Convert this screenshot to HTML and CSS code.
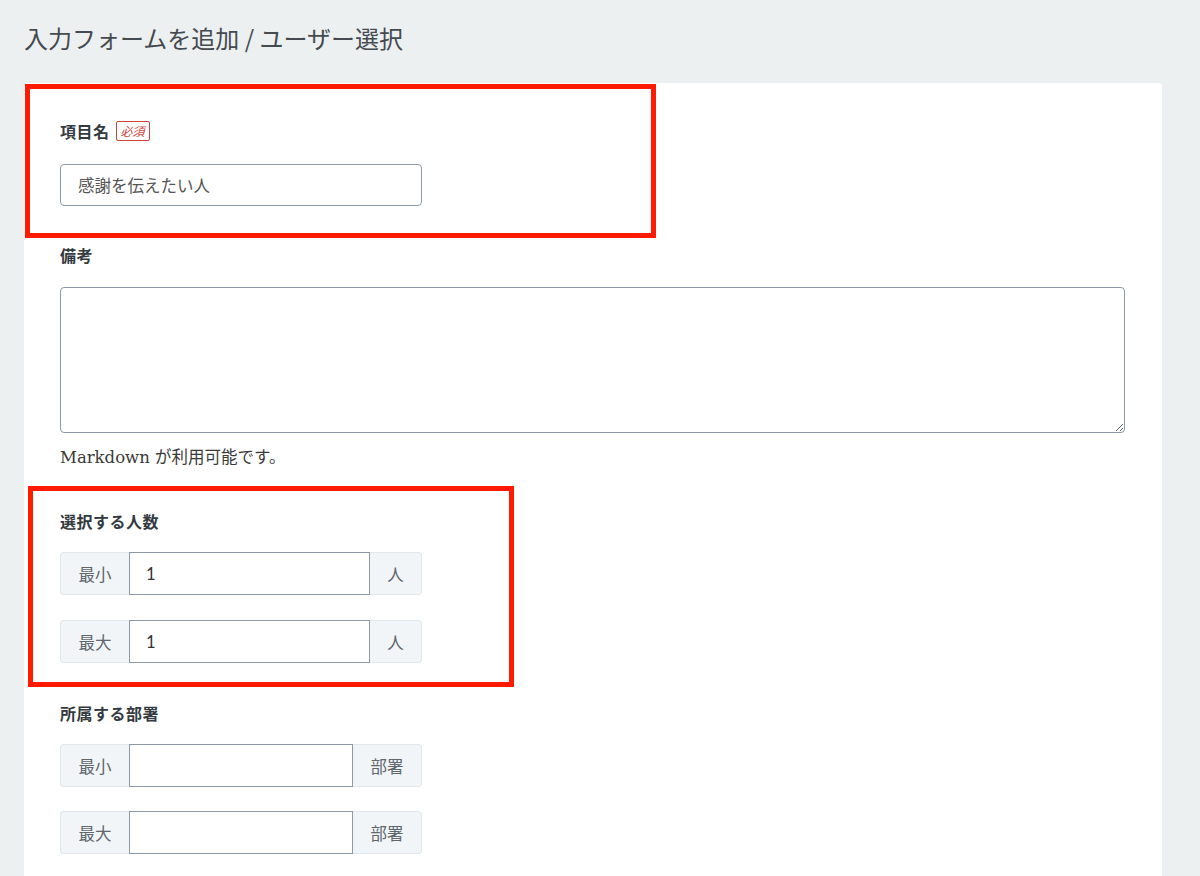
FILE: index.html
```html
<!DOCTYPE html>
<html lang="ja">
<head>
<meta charset="utf-8">
<title>入力フォームを追加 / ユーザー選択</title>
<link rel="stylesheet" href="styles.css">
</head>
<body>
<div class="page">
  <h1 class="page-title">入力フォームを追加 / ユーザー選択</h1>
  <div class="card">
    <div class="field field-name">
      <div class="label">項目名 <span class="badge">必須</span></div>
      <input class="text-input name-input" type="text" value="感謝を伝えたい人">
    </div>
    <div class="field field-note">
      <div class="label">備考</div>
      <textarea class="textarea"></textarea>
      <div class="help">Markdown が利用可能です。</div>
    </div>
    <div class="field field-count">
      <div class="label">選択する人数</div>
      <div class="input-group">
        <span class="addon addon-left">最小</span>
        <input class="group-input" type="text" value="1">
        <span class="addon addon-right">人</span>
      </div>
      <div class="input-group">
        <span class="addon addon-left">最大</span>
        <input class="group-input" type="text" value="1">
        <span class="addon addon-right">人</span>
      </div>
    </div>
    <div class="field field-dept">
      <div class="label">所属する部署</div>
      <div class="input-group">
        <span class="addon addon-left">最小</span>
        <input class="group-input" type="text" value="">
        <span class="addon addon-right wide">部署</span>
      </div>
      <div class="input-group">
        <span class="addon addon-left">最大</span>
        <input class="group-input" type="text" value="">
        <span class="addon addon-right wide">部署</span>
      </div>
    </div>
    <div class="highlight highlight-name"></div>
    <div class="highlight highlight-count"></div>
  </div>
</div>
</body>
</html>
```

FILE: styles.css
```css
* { box-sizing: border-box; }

html, body {
  margin: 0;
  padding: 0;
  background: #edf0f1;
  font-family: "Lato", "Noto Sans CJK JP", sans-serif;
  color: #333;
}

.page {
  padding: 0 38px 0 24px;
}

.page-title {
  margin: 0;
  padding-top: 23px;
  height: 83px;
  font-size: 24px;
  line-height: 30px;
  font-weight: 400;
  color: #444a4f;
  font-family: "Noto Sans CJK JP", sans-serif;
}

.card {
  position: relative;
  background: #fff;
  border-radius: 4px;
  padding: 38px 37px 60px 36px;
  min-height: 900px;
}

.field { display: flex; flex-direction: column; align-items: flex-start; }

.label {
  font-family: "Noto Sans CJK JP", sans-serif;
  font-size: 16px;
  letter-spacing: 0.5px;
  font-weight: 700;
  line-height: 20px;
  color: #333a40;
  display: flex;
  align-items: center;
  gap: 6px;
}

.badge {
  display: inline-block;
  border: 1px solid #d0443c;
  color: #d0443c;
  font-size: 12px;
  font-weight: 400;
  letter-spacing: 0;
  line-height: 16px;
  padding: 1px 4px;
  border-radius: 2px;
  font-style: italic;
  background: #fff;
}

.field-name .label { margin-bottom: 23px; }

.text-input {
  width: 362px;
  height: 42px;
  border: 1px solid #8d9aa5;
  border-radius: 4px;
  padding: 0 17px;
  font-family: "Noto Sans CJK JP", sans-serif;
  font-size: 16.5px;
  color: #555;
  outline: none;
}

.field-note { margin-top: 39px; align-items: stretch; }
.field-note .label { margin-bottom: 22px; }

.textarea {
  display: block;
  width: 100%;
  height: 146px;
  border: 1px solid #8d9aa5;
  border-radius: 4px;
  resize: both;
  outline: none;
  margin: 0;
}

.help {
  margin-top: 14px;
  font-family: "DejaVu Serif", "Noto Sans CJK JP", serif;
  font-size: 16.5px;
  line-height: 22px;
  color: #3a3a3a;
}

.field-count { margin-top: 42px; }
.field-count .label,
.field-dept .label { margin-bottom: 21px; }

.field-dept { margin-top: 40px; }

.input-group {
  display: flex;
  width: 362px;
  height: 43px;
}
.input-group + .input-group { margin-top: 25px; }
.field-dept .input-group + .input-group { margin-top: 24px; }

.addon {
  display: flex;
  align-items: center;
  justify-content: center;
  background: #f1f5f8;
  border: 1px solid #e1e7ec;
  color: #5f666c;
  font-family: "Noto Sans CJK JP", sans-serif;
  font-size: 16.5px;
  flex: none;
}
.addon-left {
  width: 69px;
  border-radius: 4px 0 0 4px;
  border-right: none;
}
.addon-right {
  width: 52px;
  border-radius: 0 4px 4px 0;
  border-left: none;
}
.addon-right.wide { width: 69px; }

.group-input {
  flex: 1;
  min-width: 0;
  height: 100%;
  border: 1px solid #8d9aa5;
  border-radius: 0;
  padding: 0 16px;
  font-family: "Lato", "Noto Sans CJK JP", sans-serif;
  font-size: 16.5px;
  color: #333;
  outline: none;
  margin: 0;
}

.highlight {
  position: absolute;
  border: 5px solid #ff1a00;
  pointer-events: none;
}
.highlight-name {
  left: 1px;
  top: 1px;
  width: 631px;
  height: 154px;
}
.highlight-count {
  left: 4px;
  top: 403px;
  width: 486px;
  height: 201px;
}
```
